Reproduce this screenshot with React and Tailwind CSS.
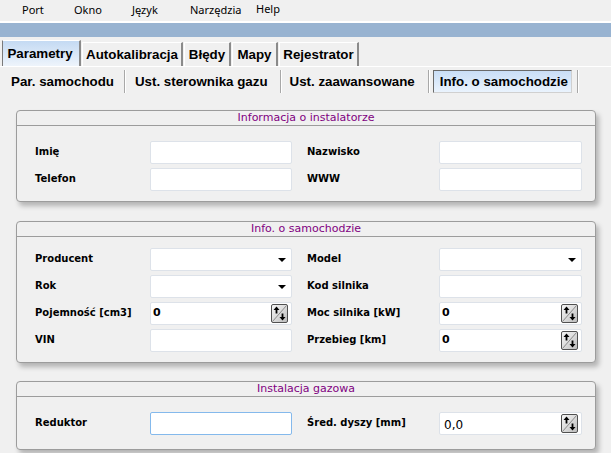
import React from "react";

const LABEL = "font-['DejaVu_Sans',sans-serif] text-[10px] font-bold text-black pb-[3px]";
const TAB = "font-['Liberation_Sans',Arial,sans-serif] text-[13.33px] font-bold text-black";

function Field({ focused, children }) {
  return (
    <div
      className={`flex h-[23px] w-full items-center rounded-[2px] border bg-white ${
        focused ? "border-[#84b9ec]" : "border-[#dde2e9]"
      }`}
    >
      {children}
    </div>
  );
}

function Combo() {
  return (
    <Field>
      <span className="ml-auto mr-[5px] h-0 w-0 border-x-[4px] border-t-[4px] border-x-transparent border-t-black" />
    </Field>
  );
}

function SpinButton() {
  return (
    <div className="ml-auto mr-[3px] h-[19px] w-[17px] rounded-[2px] border border-[#505050] bg-gradient-to-br from-[#f4f4f4] via-[#dcdcdc] to-[#bcbcbc]">
      <svg width="15" height="17" viewBox="0 0 15 17">
        <line x1="0.5" y1="16.5" x2="14.5" y2="0.5" stroke="#8a8a8a" />
        <path d="M4.5 1.5 L1.5 5 H3.6 V8.5 H5.4 V5 H7.5 Z" fill="#000" />
        <path d="M10.5 15.5 L7.5 12 H9.6 V8.5 H11.4 V12 H13.5 Z" fill="#000" />
      </svg>
    </div>
  );
}

function Spin({ value, big }) {
  return (
    <Field>
      <span
        className={
          big
            ? "ml-[4px] mt-[3px] font-['DejaVu_Sans',sans-serif] text-[12px] text-black"
            : "ml-[2px] font-['DejaVu_Sans',sans-serif] text-[11px] font-bold text-black"
        }
      >
        {value}
      </span>
      <SpinButton />
    </Field>
  );
}

function Group({ title, className, children }) {
  return (
    <div
      className={`ml-[16px] w-[580px] rounded-[4px] border border-[#9c9c9c] bg-[#f0f0f0] shadow-[3px_4px_5px_rgba(0,0,0,0.25)] ${className}`}
    >
      <div className="h-[15px] border-b border-[#9c9c9c] text-center font-['DejaVu_Sans',sans-serif] text-[11px] leading-[14px] text-[#800080]">
        {title}
      </div>
      {children}
    </div>
  );
}

function Rows({ rows, className }) {
  return (
    <div className={`grid grid-cols-[115px_142px_147px_143px] items-center gap-y-[4px] pl-[18px] ${className}`}>
      {rows.map(([l1, f1, l2, f2]) => (
        <React.Fragment key={l1}>
          <span className={LABEL}>{l1}</span>
          {f1}
          <span className={`${LABEL} pl-[15px]`}>{l2}</span>
          {f2}
        </React.Fragment>
      ))}
    </div>
  );
}

function Separator({ className = "" }) {
  return <span className={`h-[23px] w-[2px] border-l border-r border-l-[#a8a8a8] border-r-white ${className}`} />;
}

export default function App() {
  const mainTabs = [
    ["Autokalibracja", "w-[101px]"],
    ["Błędy", "w-[47px]"],
    ["Mapy", "w-[46px]"],
    ["Rejestrator", "w-[80px]"],
  ];

  return (
    <div className="h-[453px] w-[611px] overflow-hidden bg-[#f0f0f0]">
      {/* menu */}
      <div className="flex h-[21px] items-center pl-[22px] font-['Noto_Sans',sans-serif] text-[11px] text-black">
        <span className="w-[52px]">Port</span>
        <span className="w-[58px]">Okno</span>
        <span className="w-[58px]">Język</span>
        <span className="w-[66px]">Narzędzia</span>
        <span className="pb-[3px]">Help</span>
      </div>
      <div className="h-[2px] bg-white" />
      <div className="h-[14px] bg-[#98b3d1]" />

      {/* main tabs */}
      <div className="flex h-[29px] items-end pl-[2px]">
        <div
          className={`${TAB} flex h-[26px] w-[79px] items-center justify-center border-l border-t border-r-2 border-l-[#7a7a7a] border-t-white border-r-[#8a8a8a] bg-gradient-to-b from-[#c4daf3] to-[#eef4fb] pr-[2px]`}
        >
          Parametry
        </div>
        {mainTabs.map(([t, w]) => (
          <div
            key={t}
            className={`${TAB} ${w} ml-px flex h-[24px] items-center justify-center border-l border-t border-r-2 border-l-white border-t-white border-r-[#8a8a8a]`}
          >
            {t}
          </div>
        ))}
      </div>
      <div className="h-px bg-white" />

      {/* sub tabs */}
      <div className={`${TAB} flex h-[26px] items-end pl-[11px]`}>
        <div className="flex h-[23px] items-center">
          <span>Par. samochodu</span>
          <Separator className="ml-[10px]" />
          <span className="ml-[9px]">Ust. sterownika gazu</span>
          <Separator className="ml-[12px]" />
          <span className="ml-[8px]">Ust. zaawansowane</span>
          <Separator className="ml-[13px]" />
          <span className="ml-[3px] flex h-[23px] w-[139px] items-center border border-l-[#6a6a6a] border-t-[#6a6a6a] border-r-[#d0d0d0] border-b-[#d0d0d0] bg-gradient-to-b from-[#c9def6] to-[#eaf3fd] pl-[6px]">
            Info. o samochodzie
          </span>
          <Separator className="ml-[5px]" />
        </div>
      </div>

      <Group title="Informacja o instalatorze" className="mt-[17px]">
        <Rows
          className="pb-[10px] pt-[15px]"
          rows={[
            ["Imię", <Field />, "Nazwisko", <Field />],
            ["Telefon", <Field />, "WWW", <Field />],
          ]}
        />
      </Group>

      <Group title="Info. o samochodzie" className="mt-[19px]">
        <Rows
          className="pb-[10px] pt-[11px]"
          rows={[
            ["Producent", <Combo />, "Model", <Combo />],
            ["Rok", <Combo />, "Kod silnika", <Field />],
            ["Pojemność [cm3]", <Spin value="0" />, "Moc silnika [kW]", <Spin value="0" />],
            ["VIN", <Field />, "Przebieg [km]", <Spin value="0" />],
          ]}
        />
      </Group>

      <Group title="Instalacja gazowa" className="mt-[18px]">
        <Rows
          className="pb-[14px] pt-[15px]"
          rows={[["Reduktor", <Field focused />, "Śred. dyszy [mm]", <Spin value="0,0" big />]]}
        />
      </Group>
    </div>
  );
}
